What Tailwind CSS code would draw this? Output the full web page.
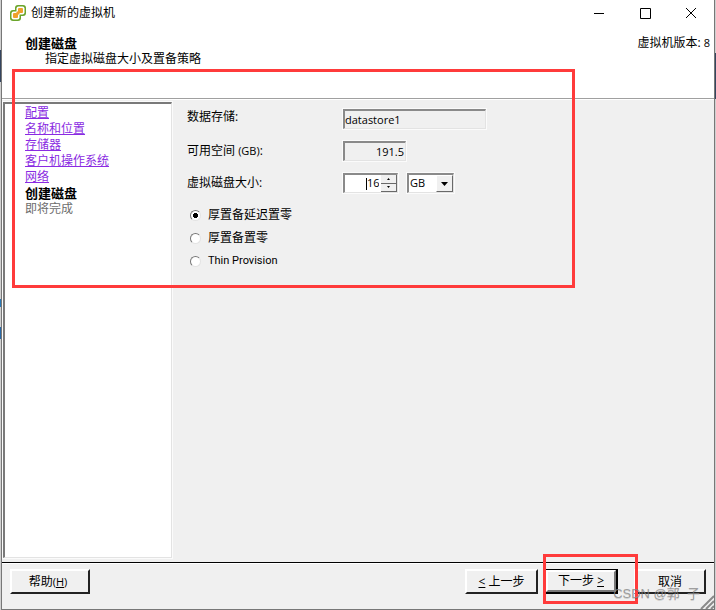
<!DOCTYPE html>
<html lang="zh-CN">
<head>
    <meta charset="UTF-8">
    <meta name="viewport" content="width=device-width, initial-scale=1.0">
    <title>创建新的虚拟机</title>
    <script src="https://cdn.jsdelivr.net/npm/@tailwindcss/browser@4"></script>
</head>
<body class="relative flex h-screen overflow-hidden bg-[#d0d0d0] font-['Open_Sans','Noto_Sans_CJK_SC',sans-serif] text-xs text-black">
    <!-- 左侧露出的背景窗口 -->
    <div class="w-px pt-[50px]">
        <div class="h-8 bg-[#34455f]"></div>
        <div class="mt-[217px] h-2 bg-[#2a78b5]"></div>
        <div class="mt-5 h-3 bg-[#2a68a5]"></div>
    </div>

    <div class="flex flex-1 flex-col border-x border-b border-[#777777] bg-[#f0f0f0]">
        <!-- 标题栏 -->
        <div class="flex h-[25px] items-center bg-white pr-px pl-2">
            <svg class="h-4 w-4" viewBox="0 0 16 16">
                <rect x="5" y="0" width="11" height="11" rx="3" fill="#6aa52b"/>
                <rect x="0" y="5" width="11" height="11" rx="3" fill="#6aa52b"/>
                <rect x="6.5" y="1.5" width="8" height="8" rx="2" fill="#fff"/>
                <rect x="1.5" y="6.5" width="8" height="8" rx="2" fill="#fff"/>
                <rect x="8" y="3" width="5" height="5" rx="1" fill="#efa02c"/>
                <rect x="3" y="8" width="5" height="5" rx="1" fill="#efa02c"/>
                <path d="M6 10L10 6" stroke="#efa02c" stroke-width="3"/>
            </svg>
            <span class="ml-[5px] flex-1">创建新的虚拟机</span>
            <button class="flex w-11 justify-center" aria-label="最小化">
                <svg class="h-3 w-3" viewBox="0 0 12 12" stroke="#000"><path d="M1 6.5H11"/></svg>
            </button>
            <button class="flex w-12 justify-center" aria-label="最大化">
                <svg class="h-3 w-3" viewBox="0 0 12 12" fill="none" stroke="#000"><path d="M1.5 1.5H11.5V11.5H1.5Z"/></svg>
            </button>
            <button class="flex w-11 justify-center" aria-label="关闭">
                <svg class="h-3 w-3" viewBox="0 0 12 12" stroke="#000"><path d="M1 1L11 11M11 1L1 11"/></svg>
            </button>
        </div>

        <!-- 步骤说明 -->
        <div class="flex h-[74px] justify-between border-b border-[#a0a0a0] bg-white pt-2.5 pr-1 pl-[23px] leading-4">
            <div>
                <h1 class="text-[13px] leading-4 font-bold">创建磁盘</h1>
                <p class="pl-5">指定虚拟磁盘大小及置备策略</p>
            </div>
            <p>虚拟机版本: <span class="text-[11px]">8</span></p>
        </div>

        <div class="flex flex-1 border-t border-white pt-0.5">
            <!-- 步骤导航 -->
            <nav class="mb-1 ml-px flex w-[169px] flex-col items-start border-t-2 border-r border-b border-l-2 border-t-[#7a7a7a] border-r-[#e3e3e3] border-b-[#e3e3e3] border-l-[#7a7a7a] bg-white pt-px pl-5 leading-4 text-[#8a2be2] outline outline-white/70">
                <a href="#" class="underline">配置</a>
                <a href="#" class="underline">名称和位置</a>
                <a href="#" class="underline">存储器</a>
                <a href="#" class="underline">客户机操作系统</a>
                <a href="#" class="underline">网络</a>
                <span class="text-[13px] leading-4 font-bold text-black">创建磁盘</span>
                <span class="text-[#6d6d6d]">即将完成</span>
            </nav>

            <!-- 磁盘设置 -->
            <form class="flex-1 pt-[7px] pl-[15px]">
                <div class="space-y-3">
                    <div class="flex items-start">
                        <label for="store" class="w-[156px] leading-4">数据存储:</label>
                        <input id="store" readonly value="datastore1" class="h-5 w-[143px] border-t-2 border-r border-b border-l-2 border-t-[#8a8a8a] border-r-[#e3e3e3] border-b-[#e3e3e3] border-l-[#8a8a8a] text-[11px] outline outline-white/70">
                    </div>
                    <div class="flex items-center">
                        <label for="free" class="w-[156px]">可用空间 <span class="text-[11px]">(GB)</span>:</label>
                        <input id="free" readonly value="191.5" class="h-5 w-[63px] border-t-2 border-r border-b border-l-2 border-t-[#8a8a8a] border-r-[#e3e3e3] border-b-[#e3e3e3] border-l-[#8a8a8a] pr-px text-right text-[11px] outline outline-white/70">
                    </div>
                    <div class="flex items-center">
                        <label for="size" class="w-[156px]">虚拟磁盘大小:</label>
                        <div class="flex h-5 w-[55px] items-center border-t-2 border-r border-b border-l-2 border-t-[#8a8a8a] border-r-[#e3e3e3] border-b-[#e3e3e3] border-l-[#8a8a8a] bg-white outline outline-white/70">
                            <div class="flex h-full flex-1 items-center justify-end">
                                <span class="h-3 w-px bg-black"></span>
                                <input id="size" value="16" class="w-3 text-right text-[11px] outline-none">
                            </div>
                            <div class="ml-0.5 flex h-full w-4 flex-col bg-[#f0f0f0]">
                                <button type="button" aria-label="增加" class="flex flex-1 items-center justify-center border-r border-b border-[#696969]">
                                    <svg class="h-0.5 w-[3px]" viewBox="0 0 3 2"><path d="M0 2L1.5 0L3 2Z"/></svg>
                                </button>
                                <button type="button" aria-label="减少" class="flex flex-1 items-center justify-center border-r border-b border-[#696969]">
                                    <svg class="h-0.5 w-[3px]" viewBox="0 0 3 2"><path d="M0 0L1.5 2L3 0Z"/></svg>
                                </button>
                            </div>
                        </div>
                        <div class="relative ml-[9px] h-5 w-[47px] border-t-2 border-r border-b border-l-2 border-t-[#8a8a8a] border-r-[#e3e3e3] border-b-[#e3e3e3] border-l-[#8a8a8a] bg-white outline outline-white/70">
                            <select aria-label="单位" class="block h-full w-full appearance-none pl-px text-[11px] outline-none">
                                <option>GB</option>
                                <option>MB</option>
                            </select>
                            <span class="pointer-events-none absolute inset-y-0 right-0 flex w-[17px] items-center justify-center border border-t-white border-r-[#696969] border-b-[#696969] border-l-white bg-[#f0f0f0]">
                                <svg class="h-1 w-[7px]" viewBox="0 0 7 4"><path d="M0 0H7L3.5 4Z"/></svg>
                            </span>
                        </div>
                    </div>
                </div>

                <div class="mt-3.5 space-y-[7px] pl-[3px] leading-4">
                    <label class="flex items-center gap-[7px]">
                        <input type="radio" name="provision" checked class="h-[11px] w-[11px] appearance-none rounded-full border border-t-[#777777] border-r-[#e3e3e3] border-b-[#e3e3e3] border-l-[#777777] bg-white bg-radial from-black from-35% to-white to-40%">
                        厚置备延迟置零
                    </label>
                    <label class="flex items-center gap-[7px]">
                        <input type="radio" name="provision" class="h-[11px] w-[11px] appearance-none rounded-full border border-t-[#777777] border-r-[#e3e3e3] border-b-[#e3e3e3] border-l-[#777777] bg-white">
                        厚置备置零
                    </label>
                    <label class="flex items-center gap-[7px]">
                        <input type="radio" name="provision" class="h-[11px] w-[11px] appearance-none rounded-full border border-t-[#777777] border-r-[#e3e3e3] border-b-[#e3e3e3] border-l-[#777777] bg-white">
                        <span class="font-[Roboto,sans-serif] text-[11px]">Thin Provision</span>
                    </label>
                </div>
            </form>
        </div>

        <!-- 底部按钮 -->
        <div class="relative flex h-[47px] items-start border-t border-black">
            <div class="flex w-full border-t border-white px-2 pt-[5px]">
                <button class="h-[25px] w-20 border-2 border-t-white border-r-[#222222] border-b-[#222222] border-l-white pr-1">帮助<span class="text-[11px]">(<u>H</u>)</span></button>
                <button class="ml-auto h-[25px] w-[73px] border-2 border-t-white border-r-[#222222] border-b-[#222222] border-l-white"><u>&lt;</u> 上一步</button>
                <div class="ml-[7px] h-[25px] w-[73px] border border-r-2 border-b-2 border-black">
                    <button class="h-full w-full border-2 border-t-white border-r-[#777777] border-b-[#777777] border-l-white">下一步 <u>&gt;</u></button>
                </div>
                <button class="ml-4 h-[25px] w-[72px] border-2 border-t-white border-r-[#222222] border-b-[#222222] border-l-white">取消</button>
            </div>
            <svg class="absolute right-0 bottom-0 h-[14px] w-[14px]" viewBox="0 0 14 14" stroke="#8a8a8a" stroke-width="2"><path d="M1 14L14 1M6 14L14 6M11 14L14 11"/></svg>
        </div>
    </div>

    <!-- 右侧露出的背景窗口 -->
    <div class="w-px pt-[53px]">
        <div class="h-[46px] bg-[#34455f]"></div>
    </div>

    <!-- 红色标注框 -->
    <div class="pointer-events-none absolute top-[69px] left-3 h-[219px] w-[563px] border-3 border-[#ff3b3b]"></div>
    <div class="pointer-events-none absolute right-[78px] bottom-1.5 h-[50px] w-[95px] border-3 border-[#ff3b3b]"></div>

    <!-- 水印 -->
    <div class="pointer-events-none absolute right-4 bottom-2 font-['Liberation_Sans','Noto_Sans_CJK_SC',sans-serif] text-[13px] leading-4 whitespace-pre text-[#888888]/80 text-shadow-2xs">CSDN @郭  子</div>
</body>
</html>
